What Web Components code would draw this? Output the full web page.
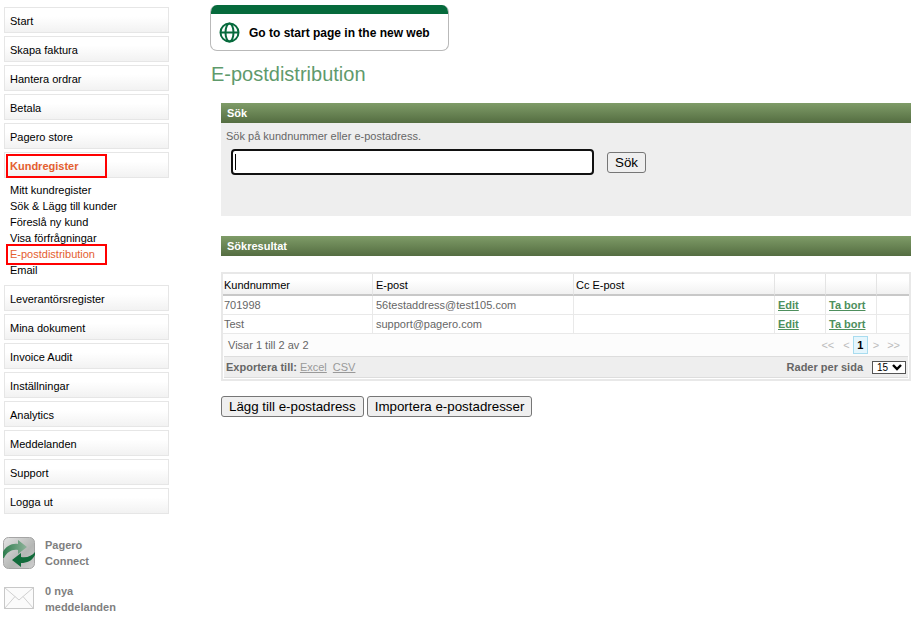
<!DOCTYPE html>
<html lang="sv">
<head>
<meta charset="utf-8">
<title>E-postdistribution</title>
<style>
  html, body { margin: 0; padding: 0; background: #fff; }
  body { font-family: "Liberation Sans", Arial, sans-serif; font-size: 11px; }
</style>
</head>
<body>
<app-shell>
  <side-nav slot="side">
    <nav-item>Start</nav-item>
    <nav-item>Skapa faktura</nav-item>
    <nav-item>Hantera ordrar</nav-item>
    <nav-item>Betala</nav-item>
    <nav-item>Pagero store</nav-item>
    <nav-item active marked>Kundregister</nav-item>
    <sub-list>
      <sub-item>Mitt kundregister</sub-item>
      <sub-item>Sök &amp; Lägg till kunder</sub-item>
      <sub-item>Föreslå ny kund</sub-item>
      <sub-item>Visa förfrågningar</sub-item>
      <sub-item active marked>E-postdistribution</sub-item>
      <sub-item>Email</sub-item>
    </sub-list>
    <nav-item>Leverantörsregister</nav-item>
    <nav-item>Mina dokument</nav-item>
    <nav-item>Invoice Audit</nav-item>
    <nav-item>Inställningar</nav-item>
    <nav-item>Analytics</nav-item>
    <nav-item>Meddelanden</nav-item>
    <nav-item>Support</nav-item>
    <nav-item>Logga ut</nav-item>
    <side-widgets></side-widgets>
  </side-nav>
  <new-web-banner>Go to start page in the new web</new-web-banner>
  <page-title>E-postdistribution</page-title>
  <section-box heading="Sök" class="search">
    <search-form></search-form>
  </section-box>
  <section-box heading="Sökresultat"></section-box>
  <result-table></result-table>
  <action-bar></action-bar>
</app-shell>

<script>
  function define(name, html, init) {
    customElements.define(name, class extends HTMLElement {
      constructor() {
        super();
        this.attachShadow({ mode: "open" }).innerHTML = html;
        if (init) init(this);
      }
    });
  }

  define("app-shell", `
    <style>
      :host { display: grid; grid-template-columns: 210px 701px; width: 923px; }
      .side { grid-column: 1; }
      .main { grid-column: 2; display: flex; flex-direction: column; padding-top: 5px; }
    </style>
    <div class="side"><slot name="side"></slot></div>
    <div class="main"><slot></slot></div>
  `);

  define("side-nav", `
    <style>
      :host { display: flex; flex-direction: column; gap: 3px; padding: 7px 0 0 4px; width: 165px; }
    </style>
    <slot></slot>
  `);

  define("nav-item", `
    <style>
      :host {
        display: flex; align-items: center; position: relative; box-sizing: border-box;
        height: 26px; padding: 1px 0 0 5px; border: 1px solid #e6e6e6;
        background: linear-gradient(#fff, #fff 35%, #f2f2f2);
        color: #000; font-size: 11px;
      }
      :host([active]) { color: #e4602f; font-weight: bold; }
      :host([marked])::after {
        content: ""; position: absolute; left: 1px; top: 1px; width: 97px; height: 20px;
        border: 2px solid #f00;
      }
    </style>
    <slot></slot>
  `);

  define("sub-list", `
    <style>
      :host { display: flex; flex-direction: column; padding: 1px 0 4px 0; }
    </style>
    <slot></slot>
  `);

  define("sub-item", `
    <style>
      :host {
        display: flex; align-items: center; position: relative;
        height: 16px; padding-left: 6px; color: #000; font-size: 11px;
      }
      :host([active]) { color: #e4602f; }
      :host([marked])::after {
        content: ""; position: absolute; left: 2px; top: -2px; width: 97px; height: 17px;
        border: 2px solid #f00;
      }
    </style>
    <slot></slot>
  `);

  define("side-widgets", `
    <style>
      :host { display: flex; flex-direction: column; margin: 20px 0 0 -1px; color: #7f7f7f; font-size: 11px; font-weight: bold; line-height: 16px; }
      .row { display: flex; align-items: center; gap: 10px; }
      .row + .row { margin-top: 14px; }
      svg { display: block; flex: none; }
    </style>
    <div class="row">
      <svg width="32" height="32" viewBox="0 0 32 32">
        <defs>
          <linearGradient id="g" x1="0" y1="0" x2="1" y2="1">
            <stop offset="0" stop-color="#e4e4e4"/><stop offset=".6" stop-color="#b4b6b4"/><stop offset="1" stop-color="#d0d0d0"/>
          </linearGradient>
          <linearGradient id="a" x1="0" y1="0" x2="1" y2="0">
            <stop offset="0" stop-color="#2f7d4e"/><stop offset="1" stop-color="#8fb39b"/>
          </linearGradient>
        </defs>
        <rect x=".5" y=".5" width="31" height="31" rx="5" fill="url(#g)" stroke="#a5a5a5"/>
        <path d="M0 15C3 9 9 6 15 7V3l9 7-9 7v-4C9 12 4 15 1 21L0 21z" fill="url(#a)"/>
        <path d="M32 15v3C29 24 24 26 18 26v4L9 23l9-7v4C24 21 29 19 32 15z" fill="#126b3b"/>
      </svg>
      <div>Pagero<br>Connect</div>
    </div>
    <div class="row">
      <svg width="32" height="24" viewBox="0 0 32 24" style="margin-top:-2px">
        <rect x="1.5" y="1.5" width="29" height="21" fill="#fbfbfb" stroke="#c8c8c8"/>
        <path d="M1.5 1.5 16 14 30.5 1.5M1.5 22.5 12 10.5M30.5 22.5 20 10.5" fill="none" stroke="#d0d0d0"/>
      </svg>
      <div>0 nya<br>meddelanden</div>
    </div>
  `);

  define("new-web-banner", `
    <style>
      :host {
        display: block; box-sizing: border-box; width: 239px; height: 46px; overflow: hidden;
        border: 1px solid #b9b9b9; border-top: 0; border-radius: 7px;
        color: #000; font-size: 12px; font-weight: bold;
      }
      .top { height: 9px; background: #066a3c; }
      .body { display: flex; align-items: center; gap: 9px; height: 36px; padding-left: 8px; }
      svg { display: block; }
      span { padding-top: 2px; }
    </style>
    <div class="top"></div>
    <div class="body">
      <svg width="21" height="21" viewBox="0 0 21 21" fill="none" stroke="#066a3c" stroke-width="2">
        <circle cx="10.5" cy="10.5" r="9"/>
        <ellipse cx="10.5" cy="10.5" rx="4" ry="9"/>
        <path d="M1.5 10.5h18"/>
      </svg>
      <span><slot></slot></span>
    </div>
  `);

  define("page-title", `
    <style>
      :host { display: block; margin: 11px 0 0 1px; height: 41px; color: #5f9a6c; font-size: 20px; line-height: 24px; }
    </style>
    <slot></slot>
  `);

  define("section-box", `
    <style>
      :host { display: block; margin-left: 11px; width: 690px; }
      :host(.search) { margin-bottom: 20px; }
      h2 {
        margin: 0; height: 20px; padding-left: 6px; box-sizing: border-box;
        background: linear-gradient(#7f9c68, #546d41);
        color: #fff; font-size: 11px; font-weight: bold; line-height: 20px;
      }
      ::slotted(*) { background: #eee; }
    </style>
    <h2></h2>
    <slot></slot>
  `, el => {
    queueMicrotask(() => { el.shadowRoot.querySelector("h2").textContent = el.getAttribute("heading"); });
  });

  define("search-form", `
    <style>
      :host { display: block; box-sizing: border-box; height: 93px; padding: 7px 0 0 5px; color: #666; font-size: 11px; }
      p { margin: 0; line-height: 13px; }
      .row { display: flex; align-items: center; margin: 6px 0 0 5px; }
      .field {
        box-sizing: border-box; width: 363px; height: 26px; background: #fff;
        border: 2px solid #111; border-radius: 4px; display: flex; align-items: center; padding-left: 2px;
      }
      .caret { width: 1px; height: 16px; background: #000; }
      button {
        margin-left: 13px; box-sizing: border-box; width: 39px; height: 21px; padding: 0;
        font: 13.33px "Liberation Sans", Arial, sans-serif; color: #000;
        background: #efefef; border: 1px solid #767676; border-radius: 3px;
      }
    </style>
    <p>Sök på kundnummer eller e-postadress.</p>
    <div class="row">
      <div class="field"><div class="caret"></div></div>
      <button>Sök</button>
    </div>
  `);

  define("result-table", `
    <style>
      :host {
        display: block; box-sizing: border-box; margin: 16px 0 0 11px; width: 690px; padding-bottom: 1px;
        border: 2px solid #e8e8e8; color: #666; font-size: 11px;
      }
      table { width: 686px; border-collapse: separate; border-spacing: 0; table-layout: fixed; }
      th {
        height: 18px; padding: 2px 2px 0; text-align: left; color: #000; font-weight: normal;
        background: linear-gradient(#fff, #fff 30%, #f1f1f1);
        border-right: 1px solid #e4e4e4; border-bottom: 2px solid #c8c8c8;
      }
      td { height: 18px; padding: 0 2px; border-right: 1px solid #e9e9e9; border-bottom: 1px solid #e9e9e9; }
      th:first-child, td:first-child { padding-left: 1px; }
      th:nth-child(2), td:nth-child(2), td:nth-child(4), td:nth-child(5) { padding-left: 3px; }
      th:last-child, td:last-child { border-right: 0; }
      td a { color: #4e8f5d; font-weight: bold; text-decoration: underline; }
      .pager {
        display: flex; justify-content: space-between; align-items: center;
        height: 22px; padding: 0 9px 0 5px; background: #fcfcfc;
      }
      .pages { display: flex; align-items: center; gap: 5px; color: #bbb; font-size: 11px; }
      .pages b {
        box-sizing: border-box; width: 15px; height: 18px; text-align: center; line-height: 16px;
        background: #e5f6fd; border: 1px solid #a8dcef; color: #000;
      }
      .export {
        display: flex; justify-content: space-between; align-items: center;
        height: 22px; box-sizing: border-box; padding: 0 2px; margin: 0 1px;
        background: #eee; border-top: 1px solid #ddd; border-bottom: 1px solid #ddd;
      }
      .export a { color: #999; text-decoration: underline; margin-left: 3px; }
      .export a + a { margin-left: 6px; }
      .rows { display: flex; align-items: center; gap: 9px; }
      .select {
        box-sizing: border-box; width: 34px; height: 13px; margin-top: 1px; border: 1px solid #555; background: #fff;
        display: flex; align-items: center; justify-content: space-between; padding: 0 3px 0 4px;
        color: #000; font-size: 10px;
      }
    </style>
    <table>
      <colgroup>
        <col style="width:150px"><col style="width:201px"><col style="width:201px">
        <col style="width:51px"><col style="width:51px"><col>
      </colgroup>
      <tr><th>Kundnummer</th><th>E-post</th><th>Cc E-post</th><th></th><th></th><th></th></tr>
      <tr><td>701998</td><td>56testaddress@test105.com</td><td></td><td><a>Edit</a></td><td><a>Ta bort</a></td><td></td></tr>
      <tr><td>Test</td><td>support@pagero.com</td><td></td><td><a>Edit</a></td><td><a>Ta bort</a></td><td></td></tr>
    </table>
    <div class="pager">
      <span>Visar 1 till 2 av 2</span>
      <span class="pages"><span>&lt;&lt;</span><span style="margin:0 -2px 0 4px">&lt;</span><b>1</b><span style="margin-right:3px">&gt;</span><span>&gt;&gt;</span></span>
    </div>
    <div class="export">
      <span><b>Exportera till:</b><a>Excel</a><a>CSV</a></span>
      <span class="rows"><b>Rader per sida</b>
        <span class="select">15
          <svg width="10" height="7" viewBox="0 0 10 7"><path d="M1 1l4 4 4-4" fill="none" stroke="#000" stroke-width="2.4"/></svg>
        </span>
      </span>
    </div>
  `);

  define("action-bar", `
    <style>
      :host { display: flex; gap: 3px; margin: 15px 0 0 11px; }
      button {
        box-sizing: border-box; height: 21px; padding: 0 7px;
        font: 13.33px "Liberation Sans", Arial, sans-serif; color: #000;
        background: #efefef; border: 1px solid #767676; border-radius: 3px;
      }
    </style>
    <button>Lägg till e-postadress</button>
    <button>Importera e-postadresser</button>
  `);
</script>
</body>
</html>
